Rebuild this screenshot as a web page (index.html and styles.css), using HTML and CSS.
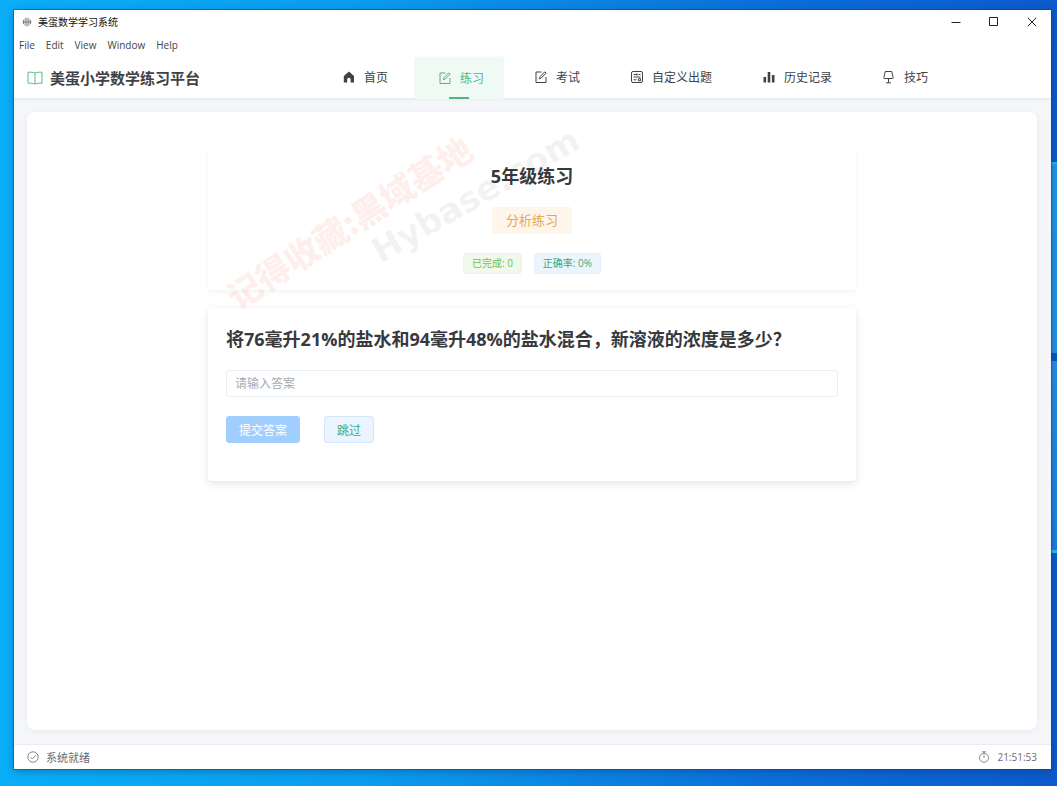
FILE: index.html
```html
<!DOCTYPE html>
<html lang="zh-CN">
<head>
<meta charset="utf-8">
<meta name="viewport" content="width=device-width, initial-scale=1">
<title>美蛋数学学习系统</title>
<link rel="stylesheet" href="styles.css">
</head>
<body class="desktop">
<div class="window">
  <div class="titlebar">
    <svg class="app-icon" viewBox="0 0 10 10" aria-hidden="true"><path d="M5 .5v9M3.2 1.2v7.6M6.8 1.2v7.6M1.5 2.8v4.4M8.5 2.8v4.4M.5 5h9" fill="none" stroke="#777" stroke-width=".9"/></svg>
    <span class="window-title">美蛋数学学习系统</span>
    <div class="window-controls">
      <button type="button" class="window-button" aria-label="最小化"><svg viewBox="0 0 10 10"><path d="M.5 5.5h9"/></svg></button>
      <button type="button" class="window-button" aria-label="最大化"><svg viewBox="0 0 10 10"><path d="M.5 .5h8v8h-8z"/></svg></button>
      <button type="button" class="window-button" aria-label="关闭"><svg viewBox="0 0 10 10"><path d="M.8.8l8.4 8.4M9.2.8L.8 9.2"/></svg></button>
    </div>
  </div>
  <div class="menubar">
    <button type="button" class="menu">File</button>
    <button type="button" class="menu">Edit</button>
    <button type="button" class="menu">View</button>
    <button type="button" class="menu">Window</button>
    <button type="button" class="menu">Help</button>
  </div>
  <header class="header">
    <div class="brand">
      <svg class="brand-icon" viewBox="0 0 16 16" aria-hidden="true"><path d="M8 3v11M1 2.200c3 0 5 0 7 .8 2-.8 4-.8 7-.8v11c-3 0-5 0-7 .8-2-.8-4-.8-7-.8z" fill="none" stroke="#5cb98a" stroke-linejoin="round"/></svg>
      <h1 class="brand-name">美蛋小学数学练习平台</h1>
    </div>
    <nav class="nav">
      <a class="nav-item" href="#home"><svg class="nav-icon" viewBox="0 0 14 14"><path d="M7 1.500L1.800 6v6.500h3.400V9.500a1.700 1.700 0 0 1 3.400 0v3h3.400V6z" fill="currentColor" stroke="none"/></svg>首页</a>
      <a class="nav-item active" href="#practice"><svg class="nav-icon" viewBox="0 0 14 14"><path d="M7.500 2H2v10.500h10V7M5.500 8.700l.5-2L10.800 1.800l1.300 1.300-5 5z"/></svg>练习</a>
      <a class="nav-item" href="#exam"><svg class="nav-icon" viewBox="0 0 14 14"><path d="M7.500 2H2v10.500h10V7M5.500 8.700l.5-2L10.800 1.800l1.300 1.300-5 5z"/></svg>考试</a>
      <a class="nav-item" href="#custom"><svg class="nav-icon" viewBox="0 0 14 14"><rect x="1.500" y="1.500" width="11" height="11" rx="1.500"/><path d="M3.500 4.500h3.500M3.500 7h7M3.500 9.800h3M10.500 4.500h-2M7 3.400v2.200M8.500 8.700h2v2.100h-2z"/></svg>自定义出题</a>
      <a class="nav-item" href="#history"><svg class="nav-icon" viewBox="0 0 14 14"><path d="M1.500 7h2.600v5.500H1.500zM5.700 2h2.600v10.500H5.700zM9.900 5h2.600v7.500H9.900z" fill="currentColor" stroke="none"/></svg>历史记录</a>
      <a class="nav-item" href="#tips"><svg class="nav-icon" viewBox="0 0 14 14"><path d="M3.300 1.500h6.400l1.500 6.200a.7.700 0 0 1-.7.800h-8a.7.700 0 0 1-.7-.8zM6.500 8.500v4M4 12.800h5"/></svg>技巧</a>
    </nav>
  </header>
  <main class="main">
    <div class="page">
      <section class="card summary">
        <h2 class="heading">5年级练习</h2>
        <span class="tag tag-warning">分析练习</span>
        <div class="stats">
          <span class="tag tag-success">已完成: 0</span>
          <span class="tag tag-primary">正确率: 0%</span>
        </div>
      </section>
      <form class="card question">
        <label class="heading" for="answer">将76毫升21%的盐水和94毫升48%的盐水混合，新溶液的浓度是多少？</label>
        <input class="answer" id="answer" type="text" placeholder="请输入答案">
        <div class="actions">
          <button type="submit" class="button submit" disabled>提交答案</button>
          <button type="button" class="button skip">跳过</button>
        </div>
      </form>
    </div>
  </main>
  <footer class="statusbar">
    <span class="status"><svg class="status-icon" viewBox="0 0 12 12"><circle cx="6" cy="6" r="5.200"/><path d="M3.500 6l1.900 1.900 3.300-3.500"/></svg>系统就绪</span>
    <span class="status clock"><svg class="status-icon" viewBox="0 0 12 12"><circle cx="6" cy="6.800" r="4.500"/><path d="M6 4v3M4 .8h4M6 .8v1.500"/></svg><time>21:51:53</time></span>
  </footer>
  <span class="watermark watermark-cn">记得收藏:黑域基地</span>
  <span class="watermark watermark-en">Hybase.com</span>
</div>
</body>
</html>
```
FILE: styles.css
```css
* { box-sizing: border-box; }

body, h1, h2 { margin: 0; }

button, input { font: inherit; color: inherit; }

.desktop {
  display: flex;
  min-height: 100vh;
  padding: 10px 6px 17px 14px;
  font-family: "Open Sans", "Noto Sans CJK SC", sans-serif;
  font-size: 12px;
  color: #404144;
  background:
    linear-gradient(transparent 162px, #35b8f0 162px, #1f97e4 166px, #2491dc 353px, #0b55c4 353px, #0b55c4 361px, #2590e0 361px, #1d7fdc 550px, #35b8ea 550px, #35b8ea 553px, transparent 553px) right / 6px 100% no-repeat,
    linear-gradient(90deg, #0aaef7, #0b9cee 35%, #0b70da 72%, #0c5acb);
}

.window {
  position: relative;
  flex: 1;
  display: flex;
  flex-direction: column;
  background: #fff;
  box-shadow: 0 0 0 1px rgba(30, 70, 100, .5), 0 2px 8px rgba(0, 30, 80, .35);
}

.titlebar {
  display: flex;
  align-items: center;
  height: 23px;
  padding-left: 8px;
  font-size: 10px;
  color: #111;
}

.app-icon { width: 10px; height: 10px; margin-right: 6px; }

.window-controls { display: flex; margin-left: auto; }

.window-button {
  display: grid;
  place-items: center;
  width: 38px;
  height: 23px;
  padding: 0;
  border: 0;
  background: none;
}

.window-button svg { width: 10px; height: 10px; fill: none; stroke: #222; }

.menubar { display: flex; gap: 11px; height: 24px; padding: 0 5px; }

.menu {
  padding: 0;
  border: 0;
  background: none;
  font-size: 10px;
  color: #444;
}

.header {
  position: relative;
  display: flex;
  height: 41px;
  padding: 0 14px 0 13px;
  box-shadow: 0 1px 3px rgba(0, 0, 0, .08);
}

.brand { display: flex; align-items: center; gap: 7px; }

.brand-icon { width: 16px; height: 16px; }

.brand-name { font-size: 15px; line-height: 24px; }

.nav {
  flex: 1;
  display: flex;
  justify-content: center;
  gap: 6px;
  padding-left: 29px;
}

.nav-item {
  display: flex;
  align-items: center;
  gap: 8px;
  height: 40px;
  padding: 0 20px 0 24px;
  border-radius: 4px;
  color: #404144;
  text-decoration: none;
  white-space: nowrap;
}

.nav-item.active {
  position: relative;
  height: 42px;
  background: #f0faf4;
  color: #4fb583;
}

.nav-item.active::after {
  content: "";
  position: absolute;
  left: 50%;
  bottom: 0;
  width: 20px;
  height: 2px;
  margin-left: -10px;
  background: #4fb583;
}

.nav-icon { width: 14px; height: 14px; fill: none; stroke: currentColor; }

.main {
  flex: 1;
  display: flex;
  padding: 14px 14px 14px 13px;
  background: #f4f6f9;
}

.page {
  flex: 1;
  display: flex;
  flex-direction: column;
  align-items: center;
  gap: 18px;
  padding: 36px 16px;
  border-radius: 8px;
  background: #fff;
  box-shadow: 0 1px 6px rgba(0, 0, 0, .05);
}

.card {
  display: flex;
  flex-direction: column;
  width: 100%;
  max-width: 648px;
  border-radius: 4px;
}

.summary {
  align-items: center;
  gap: 19px;
  padding: 16px;
  box-shadow: 0 2px 5px rgba(0, 0, 0, .05);
}

.question {
  gap: 19px;
  padding: 19px 18px 38px;
  box-shadow: 0 3px 8px rgba(0, 0, 0, .11);
}

.heading { font-size: 18px; font-weight: 700; line-height: 24px; color: #38393c; }

.tag {
  padding: 0 8px;
  border: 1px solid;
  border-radius: 3px;
  font-size: 10px;
  line-height: 19px;
}

.tag-warning {
  padding: 0 13px;
  border-color: #fdf3e8;
  background: #fef6ec;
  font-size: 13px;
  line-height: 25px;
  color: #e6a856;
}

.tag-success { border-color: #e9f7e2; background: #f0f9eb; color: #72c24a; }

.tag-primary { border-color: #e2effb; background: #ebf5fd; color: #42a878; }

.stats { display: flex; gap: 12px; }

.answer {
  width: 100%;
  height: 27px;
  padding: 0 8px;
  border: 1px solid #ebedf0;
  border-radius: 3px;
  background: #fff;
}

.answer::placeholder { color: #a8abb2; }

.actions { display: flex; gap: 24px; }

.button {
  height: 27px;
  padding: 0 12px;
  border: 1px solid;
  border-radius: 3px;
}

.submit { border-color: #a0cfff; background: #a0cfff; color: #fff; }

.skip { border-color: #d4e7fa; background: #ecf5ff; color: #42a878; }

.statusbar {
  display: flex;
  align-items: center;
  justify-content: space-between;
  height: 25px;
  padding: 0 14px 0 13px;
  border-top: 1px solid #ebedf0;
  font-size: 11px;
  color: #6a6c70;
}

.status { display: flex; align-items: center; gap: 7px; }

.clock { font-size: 10px; }

.status-icon { width: 12px; height: 12px; fill: none; stroke: currentColor; stroke-width: .8; }

.watermark {
  position: absolute;
  font-weight: 900;
  line-height: 1;
  white-space: nowrap;
  pointer-events: none;
}

.watermark-cn {
  left: 193px;
  top: 195px;
  font-family: "Noto Sans CJK SC", sans-serif;
  font-size: 34px;
  color: rgba(245, 80, 60, .1);
  transform: rotate(-33deg);
}

.watermark-en {
  left: 345px;
  top: 168px;
  font-family: "DejaVu Sans", sans-serif;
  font-size: 34px;
  color: rgba(60, 60, 60, .07);
  transform: rotate(-30deg);
}
```
